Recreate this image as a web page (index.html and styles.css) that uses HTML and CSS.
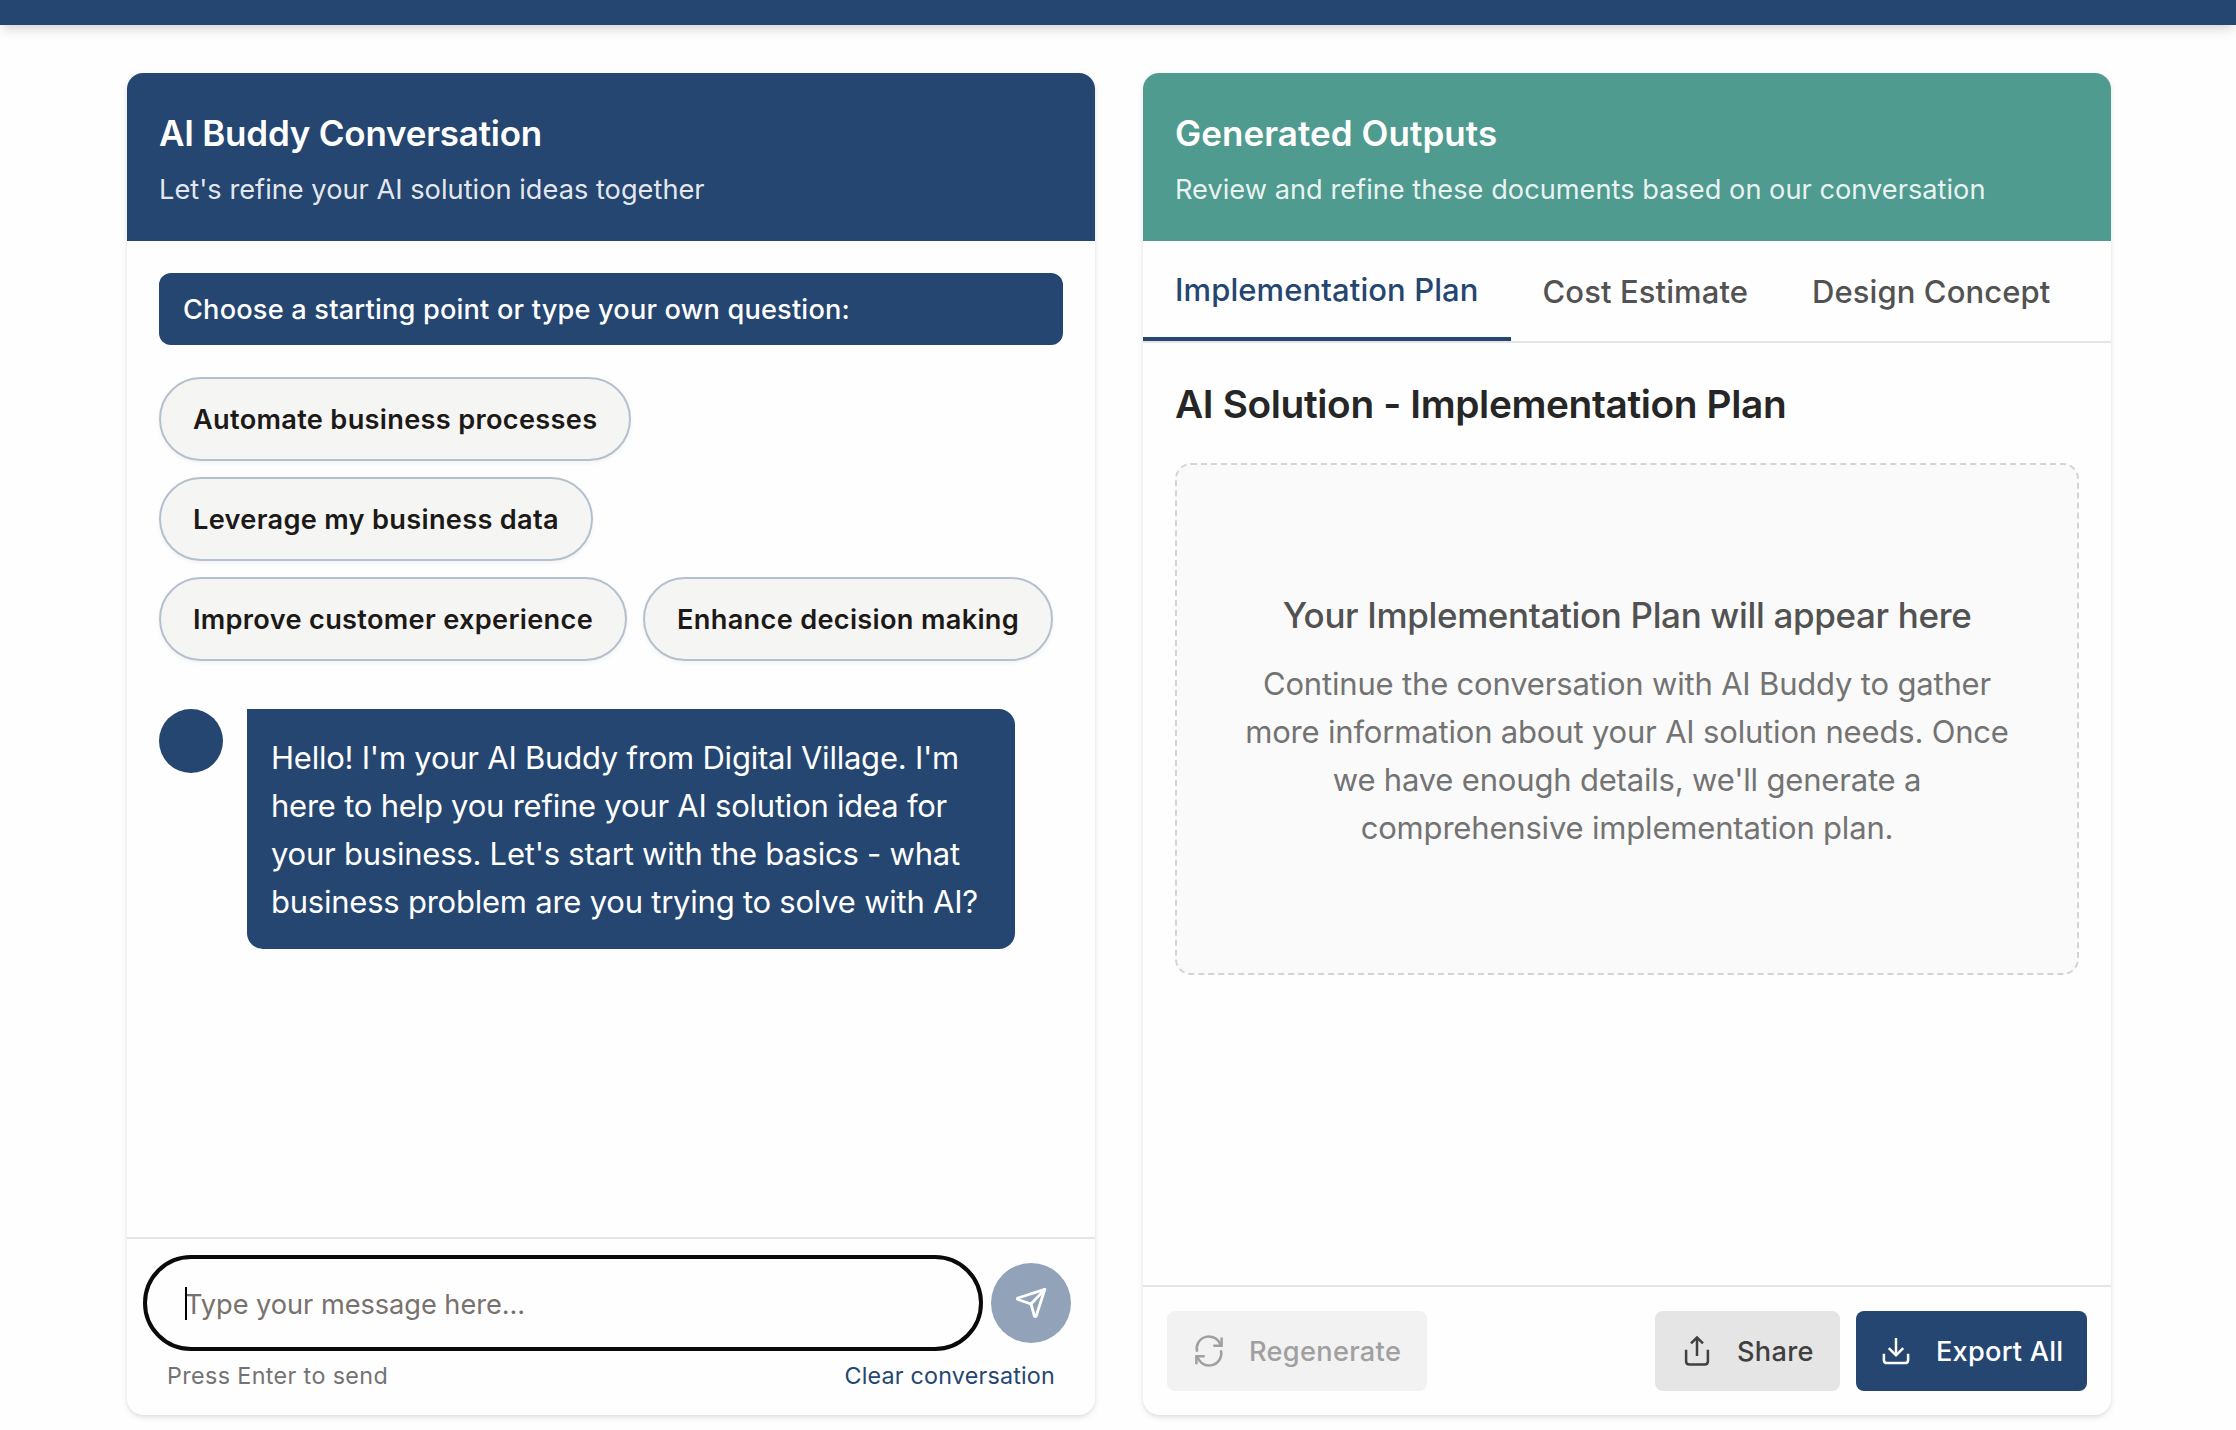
FILE: index.html
```html
<!DOCTYPE html>
<html lang="en">
<head>
<meta charset="utf-8">
<title>AI Buddy</title>
<link rel="stylesheet" href="styles.css">
</head>
<body>
<header class="topbar"></header>
<main class="workspace">
  <section class="card">
    <div class="card-head navy">
      <h2 class="card-title title-chat">AI Buddy Conversation</h2>
      <p class="card-sub">Let's refine your AI solution ideas together</p>
    </div>
    <div class="chat">
      <div class="notice">Choose a starting point or type your own question:</div>
      <div class="chips">
        <button class="chip">Automate business processes</button>
        <button class="chip">Leverage my business data</button>
        <button class="chip">Improve customer experience</button>
        <button class="chip">Enhance decision making</button>
      </div>
      <div class="message">
        <div class="avatar"></div>
        <div class="bubble">Hello! I'm your AI Buddy from Digital Village. I'm here to help you refine your AI solution idea for your business. Let's start with the basics - what business problem are you trying to solve with AI?</div>
      </div>
    </div>
    <div class="composer">
      <div class="composer-row">
        <div class="field"><span class="caret"></span><span class="placeholder">Type your message here...</span></div>
        <button class="send" aria-label="Send">
          <svg width="40" height="40" viewBox="0 0 40 40" fill="none" stroke="currentColor" stroke-width="2.8" stroke-linecap="round" stroke-linejoin="round"><path d="M33.8 6.3 6.9 15 Q5.6 15.8 6.9 16.5 L20 21 23.4 33 Q24.3 34.4 25.2 33 Z"/><path d="M20 21 33.6 6.6"/></svg>
        </button>
      </div>
      <div class="composer-foot"><span class="hint">Press Enter to send</span><a class="clear">Clear conversation</a></div>
    </div>
  </section>

  <section class="card">
    <div class="card-head green">
      <h2 class="card-title title-output">Generated Outputs</h2>
      <p class="card-sub">Review and refine these documents based on our conversation</p>
    </div>
    <nav class="tabs">
      <a class="tab active">Implementation Plan</a>
      <a class="tab">Cost Estimate</a>
      <a class="tab">Design Concept</a>
    </nav>
    <div class="output">
      <h3 class="output-title">AI Solution - Implementation Plan</h3>
      <div class="empty">
        <h4 class="empty-title">Your Implementation Plan will appear here</h4>
        <p class="empty-text">Continue the conversation with AI Buddy to gather more information about your AI solution needs. Once we have enough details, we'll generate a comprehensive implementation plan.</p>
      </div>
    </div>
    <div class="actions">
      <button class="btn regenerate">
        <svg width="36" height="36" viewBox="0 0 36 36" fill="none" stroke="currentColor" stroke-width="2.5"><path d="M6.1 18.7 A12.1 12.1 0 0 1 29.6 12.6"/><path d="M30.6 4.6 V12.7 H22.3"/><path d="M29.9 17.3 A12.1 12.1 0 0 1 6.4 23.4"/><path d="M5.4 31.2 V23.3 H13.7"/></svg>
        <span>Regenerate</span>
      </button>
      <button class="btn share">
        <svg width="36" height="36" viewBox="0 0 36 36" fill="none" stroke="currentColor" stroke-width="2.5"><path d="M7.1 16.8 V28.2 Q7.1 31.6 10.5 31.6 H25.5 Q28.9 31.6 28.9 28.2 V16.8"/><path d="M18 23 V4.8"/><path d="M12 10.4 18 4.6 24 10.4"/></svg>
        <span>Share</span>
      </button>
      <button class="btn export">
        <svg width="36" height="36" viewBox="0 0 36 36" fill="none" stroke="currentColor" stroke-width="2.5"><path d="M5.9 20.8 V26.9 Q5.9 30.1 9.1 30.1 H26.9 Q30.1 30.1 30.1 26.9 V20.8"/><path d="M18 5 V22"/><path d="M10.8 15.2 18 22.3 25.2 15.2"/></svg>
        <span>Export All</span>
      </button>
    </div>
  </section>
</main>
</body>
</html>
```
FILE: styles.css
```css
:root {
  --navy: #254670;
  --green: #4f9b8f;
  --line: #e5e5e5;
}

* {
  box-sizing: border-box;
  margin: 0;
  padding: 0;
}

body {
  height: 1430px;
  overflow: hidden;
  background: #fefefe;
  font-family: Inter, "Liberation Sans", sans-serif;
  color: #262626;
}

button {
  border: 0;
  font: inherit;
}

.topbar {
  height: 25px;
  background: var(--navy);
  box-shadow: 0 8px 12px -2px rgba(0, 0, 0, 0.1), 0 4px 8px -4px rgba(0, 0, 0, 0.1);
}

.workspace {
  display: grid;
  grid-template-columns: 968px 968px;
  gap: 48px;
  padding: 48px 0 0 127px;
}

.card {
  display: flex;
  flex-direction: column;
  height: 1342px;
  border-radius: 16px;
  background: #fefefe;
  box-shadow: 0 2px 6px rgba(0, 0, 0, 0.1), 0 2px 4px -2px rgba(0, 0, 0, 0.1);
}

.card-head {
  height: 168px;
  padding: 33px 32px 0;
  border-radius: 16px 16px 0 0;
  color: #fff;
}

.navy {
  background: var(--navy);
}

.green {
  background: var(--green);
}

.card-title {
  font-size: 35px;
  font-weight: 600;
  line-height: 54px;
}

.title-chat {
  letter-spacing: -0.23px;
}

.title-output {
  letter-spacing: 0.05px;
}

.card-sub {
  margin-top: 9px;
  font-size: 27.2px;
  line-height: 42px;
  letter-spacing: 0.02px;
  color: rgba(255, 255, 255, 0.9);
}

.chat {
  flex: 1;
  padding: 32px;
}

.notice {
  padding: 16px 24px 14px;
  border-radius: 12px;
  background: var(--navy);
  color: #fff;
  font-size: 27.2px;
  font-weight: 500;
  line-height: 42px;
  letter-spacing: 0.18px;
}

.chips {
  display: flex;
  flex-wrap: wrap;
  gap: 16px;
  padding-top: 32px;
}

.chip {
  height: 84px;
  padding: 0 32px;
  border: 2px solid #b5c0ce;
  border-radius: 42px;
  background: #f5f5f4;
  box-shadow: 0 2px 4px rgba(0, 0, 0, 0.05);
  color: #1c1917;
  font-size: 27.2px;
  font-weight: 600;
  letter-spacing: 0.3px;
}

/* the second suggestion keeps a row to itself */
.chip:nth-child(2) {
  margin-right: 300px;
}

.message {
  display: flex;
  gap: 24px;
  margin-top: 48px;
}

.avatar {
  width: 64px;
  height: 64px;
  border-radius: 50%;
  background: var(--navy);
}

.bubble {
  width: 768px;
  padding: 25px 24px 23px;
  border-radius: 0 16px 16px 16px;
  background: var(--navy);
  color: #fff;
  font-size: 31px;
  line-height: 48px;
  letter-spacing: -0.23px;
}

.composer {
  padding: 20px 24px 23px 20px;
  border-top: 2px solid var(--line);
}

.composer-row {
  display: flex;
  align-items: center;
  gap: 12px;
}

.field {
  position: relative;
  display: flex;
  align-items: center;
  flex: 1;
  height: 88px;
  padding-left: 38px;
  border-radius: 44px;
  outline: 4px solid #0a0a0a;
}

.caret {
  position: absolute;
  top: 28px;
  left: 38px;
  width: 2px;
  height: 33px;
  background: #000;
}

.placeholder {
  padding-top: 3px;
  font-size: 27.2px;
  letter-spacing: -0.04px;
  color: #78716c;
}

.send {
  display: flex;
  align-items: center;
  justify-content: center;
  width: 80px;
  height: 80px;
  border-radius: 50%;
  background: #92a2b8;
  color: #fff;
}

.composer-foot {
  display: flex;
  justify-content: space-between;
  margin-top: 12px;
  padding: 0 16px 0 20px;
  font-size: 23.3px;
  line-height: 33px;
}

.hint {
  letter-spacing: 0.38px;
  color: #737373;
}

.clear {
  letter-spacing: 0.2px;
  color: var(--navy);
}

.tabs {
  display: flex;
  height: 102px;
  border-bottom: 2px solid var(--line);
}

.tab {
  display: flex;
  align-items: center;
  padding: 0 32px;
  font-size: 31px;
  font-weight: 500;
  letter-spacing: 0.09px;
  color: #525252;
}

.tab.active {
  border-bottom: 4px solid var(--navy);
  color: var(--navy);
}

.output {
  flex: 1;
  padding: 32px;
}

.output-title {
  font-size: 38.8px;
  font-weight: 600;
  line-height: 58px;
  letter-spacing: -0.36px;
}

.empty {
  height: 512px;
  margin-top: 30px;
  padding: 123px 62px 0;
  border: 2px dashed #d4d4d4;
  border-radius: 16px;
  background: #fafafa;
  text-align: center;
}

.empty-title {
  font-size: 35px;
  font-weight: 500;
  line-height: 54px;
  letter-spacing: -0.35px;
  color: #525252;
}

.empty-text {
  margin-top: 18px;
  font-size: 31px;
  line-height: 48px;
  letter-spacing: -0.18px;
  color: #737373;
}

.actions {
  display: flex;
  gap: 16px;
  padding: 24px;
  border-top: 2px solid var(--line);
}

.btn {
  display: flex;
  align-items: center;
  gap: 22px;
  height: 80px;
  padding-left: 24px;
  border-radius: 8px;
  font-size: 27.2px;
  font-weight: 500;
  letter-spacing: 0.3px;
  white-space: nowrap;
}

.regenerate {
  width: 260px;
  margin-right: auto;
  background: #f2f2f2;
  color: #a0a0a0;
}

.share {
  width: 185px;
  background: #e5e5e5;
  color: #404040;
}

.export {
  width: 231px;
  padding-left: 22px;
  background: var(--navy);
  color: #fff;
  letter-spacing: 0.22px;
}
```
